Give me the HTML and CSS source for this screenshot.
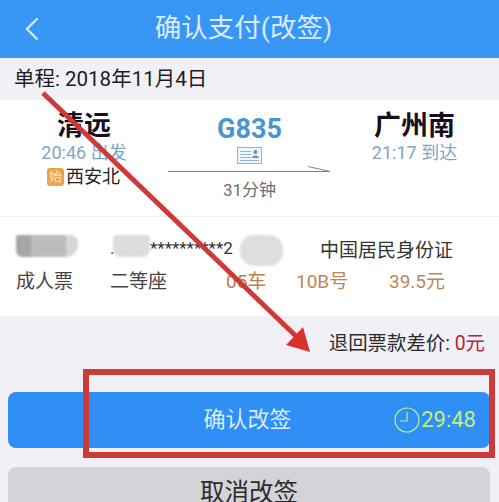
FILE: index.html
```html
<!DOCTYPE html>
<html lang="zh">
<head>
<meta charset="utf-8">
<title>确认支付(改签)</title>
<link rel="stylesheet" href="styles.css">
</head>
<body>
<div class="page">
  <header class="nav">
    <svg class="back" width="16" height="26" viewBox="0 0 16 26"><path d="M13.5 2.5 3 13l10.500 10.500" fill="none" stroke="#d5e8fc" stroke-width="2.400"/></svg>
    <h1 class="title">确认支付(改签)</h1>
  </header>
  <div class="date">单程: 2018年11月4日</div>
  <section class="trip">
    <div class="station">
      <div class="city">清远</div>
      <div class="time">20:46 出发</div>
      <div class="via"><span class="badge">始</span>西安北</div>
    </div>
    <div class="train">
      <div class="code">G835</div>
      <svg class="idcard" width="25" height="17" viewBox="0 0 25 17"><rect x=".5" y=".5" width="24" height="16" fill="#eef6fa" stroke="#8fb8d0"/><path d="M3 4.500h11M3 7.500h11M3 10.500h11M3 13.500h19" fill="none" stroke="#8fb8d0"/><circle cx="18.500" cy="5" r="2" fill="#5f94bd"/><path d="M15 11c0-3.500 7-3.500 7 0z" fill="#5f94bd"/></svg>
      <svg class="line" width="163" height="6" viewBox="0 0 163 6"><path d="M0 5.500h162L140 .5" fill="none" stroke="#808080" stroke-width="1"/></svg>
      <div class="dur">31分钟</div>
    </div>
    <div class="station end">
      <div class="city">广州南</div>
      <div class="time">21:17 到达</div>
    </div>
  </section>
  <section class="passenger">
    <div class="row top">
      <span class="c1"></span>
      <span class="c2"><span class="dot">.</span>**********2</span>
      <span class="c3">中国居民身份证</span>
    </div>
    <div class="row bottom">
      <span class="b1">成人票</span>
      <span class="b2">二等座</span>
      <span class="b3">05车</span>
      <span class="b4">10B号</span>
      <span class="b5">39.5元</span>
    </div>
  </section>
  <div class="refund">退回票款差价: <em>0元</em></div>
  <button class="btn primary">
    <span class="label">确认改签</span>
    <span class="timer"><svg width="26" height="26" viewBox="0 0 26 26"><circle cx="13" cy="13" r="12" fill="none" stroke="#c5f08a" stroke-width="1.200"/><path d="M13 5v9H6" fill="none" stroke="#c5f08a" stroke-width="1.200"/></svg>29:48</span>
  </button>
  <button class="btn secondary">取消改签</button>
</div>
<div class="blur blur1"></div>
<div class="blur blur2"></div>
<div class="blur blur3"></div>
<svg class="marks" width="499" height="502" viewBox="0 0 499 502">
  <path d="M43 93 300 340" stroke="#cf3a38" stroke-width="5" fill="none"/>
  <path d="M310 352 286 345 303 327z" fill="#d8322f"/>
  <rect x="86" y="372" width="406" height="83" fill="none" stroke="#cc3a3a" stroke-width="6"/>
</svg>
</body>
</html>
```
FILE: styles.css
```css
* { box-sizing: border-box; }
html, body { margin: 0; padding: 0; }
body {
  width: 499px;
  height: 502px;
  overflow: hidden;
  position: relative;
  background: #f0f0f6;
  font-family: Roboto, "Noto Sans CJK SC", sans-serif;
  color: #222;
}
.page { display: flex; flex-direction: column; height: 502px; overflow: hidden; }
.nav {
  position: relative;
  height: 58px;
  flex: none;
  background: #3896f5;
  display: flex;
  align-items: center;
  justify-content: center;
}
.back { position: absolute; left: 24px; top: 16px; }
.title { margin: 0 12px 1px 0; font-size: 26.500px; font-weight: 400; color: #dcebfb; line-height: 1; }
.date {
  height: 42px;
  flex: none;
  padding: 0 0 0 14px;
  font-size: 20.500px;
  line-height: 42px;
  color: #1c1c1c;
}
.trip {
  height: 117px;
  flex: none;
  background: #fff;
  display: grid;
  grid-template-columns: 166px 167px 1fr;
  border-bottom: 1px solid #f0f0f4;
}
.station { display: flex; flex-direction: column; align-items: center; padding-left: 2px; }
.station.end { padding: 0 3px 0 0; }
.city { font-size: 27px; font-weight: 700; line-height: 27px; margin-top: 13px; color: #17101a; }
.time { font-size: 18px; line-height: 20px; margin-top: 3px; color: #7ba7c4; }
.via { display: flex; align-items: center; font-size: 18px; line-height: 24px; color: #222; margin: 2px 1px 0 0; }
.badge {
  width: 17px; height: 18px; border-radius: 3px; background: #e9a44f; color: #fbe9c9;
  font-size: 13px; line-height: 18px; text-align: center; margin-right: 2px;
}
.train { display: flex; flex-direction: column; align-items: center; }
.code { font-size: 27px; font-weight: 700; line-height: 28px; margin-top: 15px; color: #4a94d2; }
.idcard { margin-top: 4px; flex: none; }
.line { margin-top: 2px; flex: none; }
.dur { font-size: 17px; line-height: 22px; margin-top: 7px; color: #6e6e6e; }
.passenger { height: 99px; flex: none; background: #fff; padding: 19px 0 0 16px; }
.row { display: flex; align-items: center; white-space: nowrap; }
.top { height: 24px; color: #333; }
.c1 { width: 94px; }
.c2 { width: 210px; font-size: 17px; overflow: hidden; }
.dot { display: inline-block; width: 40px; }
.c3 { font-size: 19px; color: #333; }
.bottom { height: 30px; margin-top: 4px; font-size: 19px; color: #444; }
.b1 { width: 94px; }
.b2 { width: 116px; }
.b3 { width: 70px; color: #c07a50; }
.b4 { width: 93px; color: #b9875a; }
.b5 { color: #b9875a; }
.refund {
  height: 54px;
  flex: none;
  text-align: right;
  padding: 13px 14px 0 0;
  font-size: 19.400px;
  line-height: 30px;
  color: #2a2a2a;
}
.refund em { font-style: normal; color: #b4243c; }
.btn {
  display: block;
  flex: none;
  border: 0;
  font-family: inherit;
  margin: 0 0 0 8px;
  width: 482px;
  border-radius: 8px;
  padding: 0;
  text-align: center;
}
.primary {
  position: relative;
  height: 56px;
  margin-top: 22px;
  background: #2f8ff5;
  color: #d9ebf7;
  font-size: 22px;
  padding: 0 3px 6px 0;
}
.timer {
  position: absolute;
  right: 14px;
  top: 15px;
  display: flex;
  align-items: center;
  gap: 1px;
  color: #c4ee80;
  font-size: 22px;
  line-height: 26px;
}
.secondary {
  height: 56px;
  margin-top: 19px;
  background: #d4d4d8;
  color: #2b2b2b;
  font-size: 24.500px;
  padding-bottom: 9px;
}
.blur { position: absolute; filter: blur(1px); }
.blur1 { left: 16px; top: 235px; width: 62px; height: 22px; background: linear-gradient(90deg, #a6a6a6 25%, #bcbcbc 25%, #bcbcbc 80%, #d6d6d6 80%); border-radius: 2px 8px 12px 6px; }
.blur2 { left: 113px; top: 235px; width: 37px; height: 22px; background: #dcdcdc; border-radius: 3px 3px 8px 8px; }
.blur3 { left: 240px; top: 235px; width: 43px; height: 31px; background: #dedede; border-radius: 14px; }
.marks { position: absolute; left: 0; top: 0; pointer-events: none; }
```
